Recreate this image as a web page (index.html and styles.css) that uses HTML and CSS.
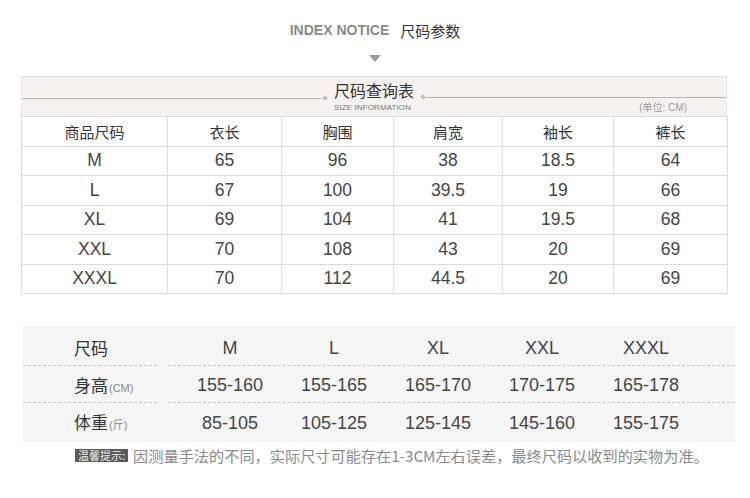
FILE: index.html
```html
<!DOCTYPE html>
<html lang="zh-CN">
<head>
<meta charset="utf-8">
<title>尺码参数</title>
<link rel="stylesheet" href="styles.css">
</head>
<body>
<div class="page">
  <div class="title">
    <span class="title-en">INDEX NOTICE</span>
    <span class="title-cn">尺码参数</span>
  </div>
  <div class="arrow"></div>

  <div class="sheet">
    <div class="sheet-head">
      <div class="head-left">
        <span class="line"></span><span class="dot"></span>
      </div>
      <div class="head-text">
        <div class="head-cn">尺码查询表</div>
        <div class="head-en">SIZE INFORMATION</div>
      </div>
      <div class="head-right">
        <div class="head-right-line"><span class="dot"></span><span class="line"></span></div>
        <div class="unit">(单位: CM)</div>
      </div>
    </div>
    <table class="size-table">
      <colgroup>
        <col class="c1"><col class="c2"><col class="c3"><col class="c4"><col class="c5"><col class="c6">
      </colgroup>
      <tr class="th"><td>商品尺码</td><td>衣长</td><td>胸围</td><td>肩宽</td><td>袖长</td><td>裤长</td></tr>
      <tr><td>M</td><td>65</td><td>96</td><td>38</td><td>18.5</td><td>64</td></tr>
      <tr><td>L</td><td>67</td><td>100</td><td>39.5</td><td>19</td><td>66</td></tr>
      <tr><td>XL</td><td>69</td><td>104</td><td>41</td><td>19.5</td><td>68</td></tr>
      <tr><td>XXL</td><td>70</td><td>108</td><td>43</td><td>20</td><td>69</td></tr>
      <tr><td>XXXL</td><td>70</td><td>112</td><td>44.5</td><td>20</td><td>69</td></tr>
    </table>
  </div>

  <div class="fit">
    <div class="fit-row">
      <div class="fit-label"><span class="lab">尺码</span></div>
      <div class="fit-vals"><span>M</span><span>L</span><span>XL</span><span>XXL</span><span>XXXL</span></div>
    </div>
    <div class="fit-row">
      <div class="fit-label"><span class="lab">身高<small>(CM)</small></span></div>
      <div class="fit-vals"><span>155-160</span><span>155-165</span><span>165-170</span><span>170-175</span><span>165-178</span></div>
    </div>
    <div class="fit-row last">
      <div class="fit-label"><span class="lab">体重<small>(斤)</small></span></div>
      <div class="fit-vals"><span>85-105</span><span>105-125</span><span>125-145</span><span>145-160</span><span>155-175</span></div>
    </div>
  </div>

  <div class="tip">
    <span class="tip-tag">温馨提示:</span>
    <span class="tip-text">因测量手法的不同，实际尺寸可能存在1-3CM左右误差，最终尺码以收到的实物为准。</span>
  </div>
</div>
</body>
</html>
```

FILE: styles.css
```css
* { box-sizing: border-box; }
html, body { margin: 0; padding: 0; background: #fff; }
body {
  font-family: "Liberation Sans", "Noto Sans CJK SC", sans-serif;
  color: #444;
}
.page { width: 750px; height: 498px; overflow: hidden; }

.title {
  display: flex;
  justify-content: center;
  align-items: center;
  padding-top: 20px;
  height: 40px;
}
.title-en {
  font-weight: bold;
  font-size: 14px;
  color: #8a8a8a;
}
.title-cn {
  margin-left: 11px;
  font-size: 15px;
  color: #333;
  font-family: "Noto Sans CJK SC", sans-serif;
}
.arrow {
  width: 0; height: 0;
  margin: 15px auto 0;
  border-left: 6px solid transparent;
  border-right: 6px solid transparent;
  border-top: 7px solid #9a9a9a;
}

.sheet { margin: 14px 23px 0 21px; width: 706px; }
.sheet-head {
  height: 40px;
  background: #f6f1f1;
  border-top: 1px solid #e2dcdc;
  border-left: 1px solid #e6e2e2;
  border-right: 1px solid #e6e2e2;
  display: flex;
  align-items: flex-start;
}
.line { display: block; height: 1px; background: #b9b4b4; flex: 1; }
.dot {
  display: block;
  width: 4px; height: 4px;
  background: #c4bebe;
  transform: rotate(45deg);
}
.head-left {
  flex: 1;
  display: flex;
  align-items: center;
  margin-top: 19px;
}
.head-left .dot { margin-left: 2px; }
.head-text {
  margin-left: 7px;
  width: 80px;
  padding-top: 4px;
}
.head-cn {
  font-family: "Noto Sans CJK SC", sans-serif;
  font-size: 16px;
  line-height: 18px;
  color: #333;
  white-space: nowrap;
}
.head-en {
  font-size: 8px;
  line-height: 10px;
  margin-top: 4px;
  color: #777;
  letter-spacing: 0.1px;
  white-space: nowrap;
}
.head-right {
  flex: 1;
  margin-left: 7px;
  display: flex;
  flex-direction: column;
  margin-top: 18px;
}
.head-right-line { display: flex; align-items: center; }
.head-right-line .dot { margin-right: 1px; }
.unit {
  align-self: flex-end;
  margin-right: 39px;
  margin-top: 3px;
  font-size: 10px;
  line-height: 12px;
  color: #9a9a9a;
}

.size-table {
  width: 706px;
  border-collapse: collapse;
  table-layout: fixed;
}
.c1 { width: 146px; } .c2 { width: 114px; } .c3 { width: 112px; }
.c4 { width: 109px; } .c5 { width: 111px; } .c6 { width: 114px; }
.size-table td {
  border: 1px solid #dcdcdc;
  height: 29.5px;
  padding: 0;
  text-align: center;
  font-size: 17.5px;
  color: #454545;
  background: #fff;
}
.size-table .th td {
  font-family: "Noto Sans CJK SC", sans-serif;
  font-size: 15px;
  color: #333;
}

.fit {
  margin: 32px 15px 0 23px;
  background: #f5f5f5;
  padding-top: 3px;
  padding-bottom: 2px;
}
.fit-row { display: flex; height: 37px; }
.fit-label {
  width: 134px;
  padding-left: 51px;
  display: flex;
  align-items: center;
  border-bottom: 1px dashed #c8c8c8;
}
.lab {
  font-family: "Noto Sans CJK SC", sans-serif;
  font-size: 17px;
  color: #333;
  white-space: nowrap;
}
.lab small {
  font-family: "Liberation Sans", "Noto Sans CJK SC", sans-serif;
  font-size: 11px;
  color: #888;
  margin-left: 1px;
}
.fit-vals {
  margin-left: 11px;
  flex: 1;
  display: flex;
  padding-left: 10px;
  border-bottom: 1px dashed #c8c8c8;
}
.fit-row.last .fit-label, .fit-row.last .fit-vals { border-bottom: none; }
.fit-vals span {
  width: 104px;
  display: flex;
  align-items: center;
  justify-content: center;
  padding-top: 3px;
  font-size: 18px;
  color: #454545;
}

.tip {
  display: flex;
  align-items: center;
  margin-top: 2px;
  padding-left: 75px;
  font-family: "Noto Sans CJK SC", sans-serif;
}
.tip-tag {
  background: #5a5a5a;
  color: #eee;
  font-size: 11px;
  line-height: 13px;
  padding: 0 3px;
}
.tip-text {
  margin-left: 5px;
  font-size: 15.2px;
  color: #8a8a8a;
  white-space: nowrap;
}
```
